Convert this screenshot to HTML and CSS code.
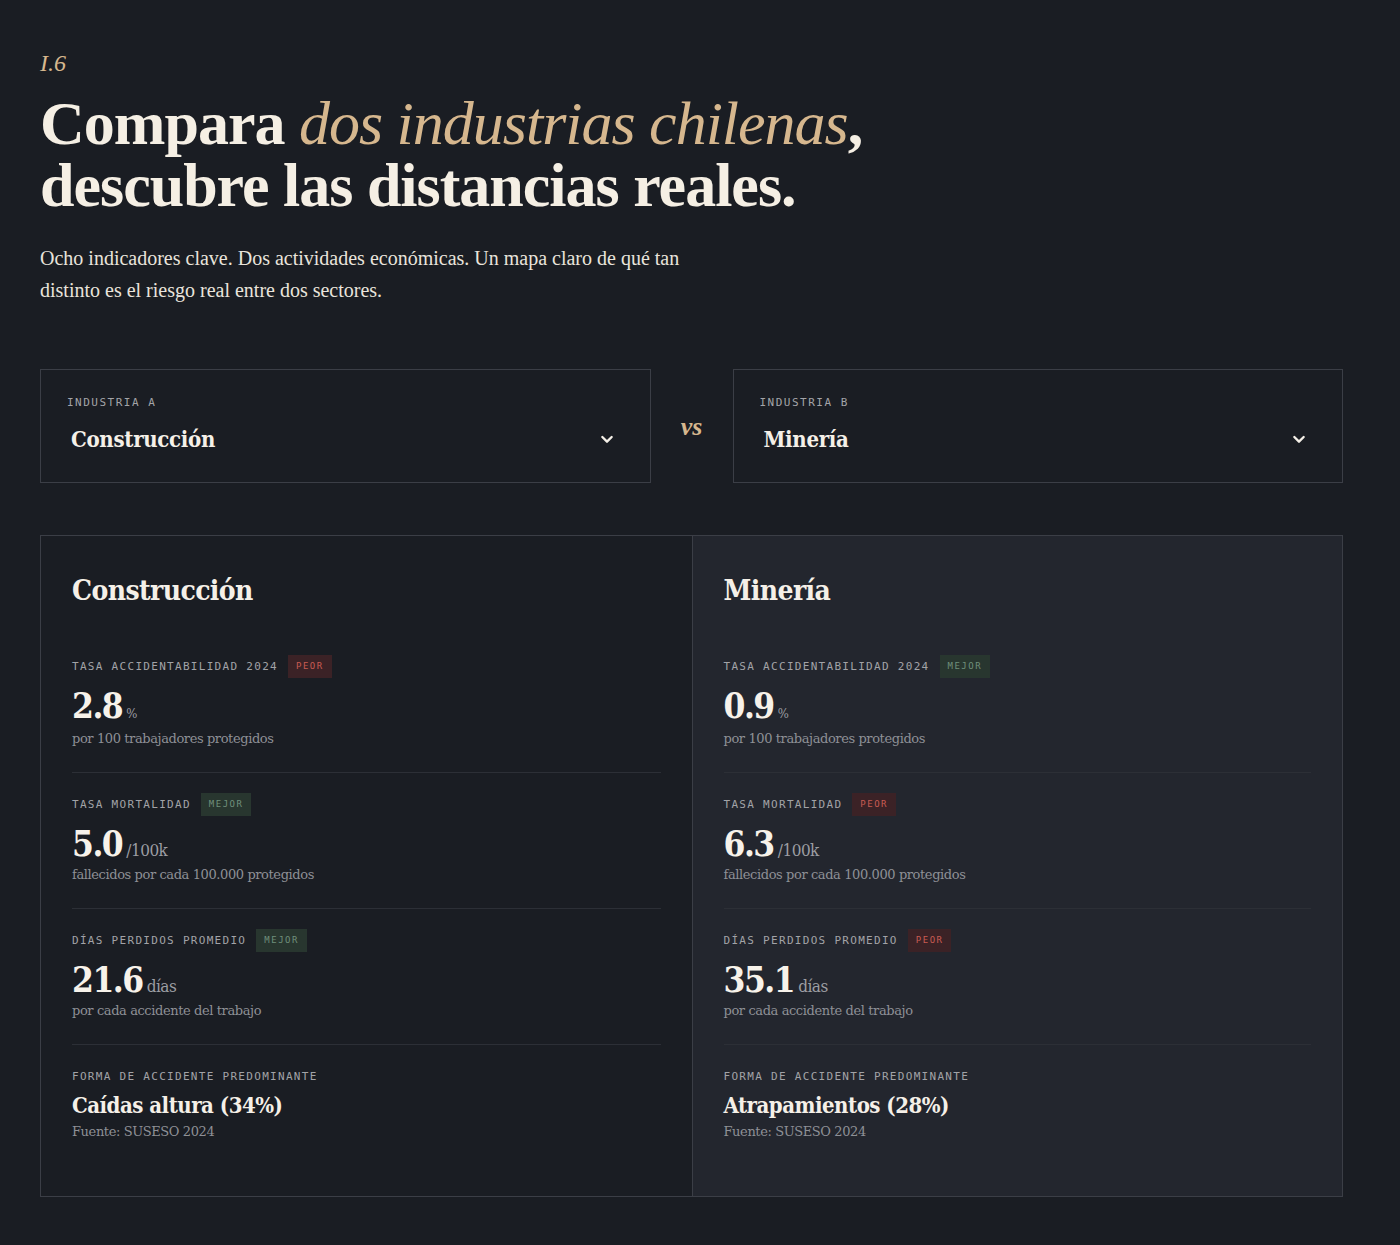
FILE: index.html
```html
<!DOCTYPE html>
<html lang="es">
<head>
    <meta charset="UTF-8">
    <meta name="viewport" content="width=device-width, initial-scale=1.0">
    <title>Compara dos industrias chilenas</title>
    <link rel="stylesheet" href="styles.css">
</head>
<body>

    <div class="container">
        <div class="eyebrow">I.6</div>
        <h1>Compara <em>dos industrias chilenas</em>,<br>descubre las distancias reales.</h1>
        <p class="intro">Ocho indicadores clave. Dos actividades económicas. Un mapa claro de qué tan distinto es el riesgo real entre dos sectores.</p>

        <div class="pickers">
            <div class="picker">
                <div class="picker-label">INDUSTRIA A</div>
                <div class="picker-value">
                    <span>Construcción</span>
                    <svg class="chevron" width="16" height="16" viewBox="0 0 24 24"><path d="M5 9l7 7 7-7" fill="none" stroke="currentColor" stroke-width="3.5" stroke-linecap="round" stroke-linejoin="round"/></svg>
                </div>
            </div>
            <div class="vs">vs</div>
            <div class="picker">
                <div class="picker-label">INDUSTRIA B</div>
                <div class="picker-value">
                    <span>Minería</span>
                    <svg class="chevron" width="16" height="16" viewBox="0 0 24 24"><path d="M5 9l7 7 7-7" fill="none" stroke="currentColor" stroke-width="3.5" stroke-linecap="round" stroke-linejoin="round"/></svg>
                </div>
            </div>
        </div>

        <div class="compare">
            <div class="col">
                <h2>Construcción</h2>

                <div class="metric">
                    <div class="metric-label">TASA ACCIDENTABILIDAD 2024 <span class="badge worse">PEOR</span></div>
                    <div class="metric-value">2.8<span class="unit small">%</span></div>
                    <div class="metric-desc">por 100 trabajadores protegidos</div>
                </div>
                <div class="metric">
                    <div class="metric-label">TASA MORTALIDAD <span class="badge better">MEJOR</span></div>
                    <div class="metric-value">5.0<span class="unit">/100k</span></div>
                    <div class="metric-desc">fallecidos por cada 100.000 protegidos</div>
                </div>
                <div class="metric">
                    <div class="metric-label">DÍAS PERDIDOS PROMEDIO <span class="badge better">MEJOR</span></div>
                    <div class="metric-value">21.6<span class="unit">días</span></div>
                    <div class="metric-desc">por cada accidente del trabajo</div>
                </div>
                <div class="metric last">
                    <div class="metric-label">FORMA DE ACCIDENTE PREDOMINANTE</div>
                    <div class="metric-text">Caídas altura (34%)</div>
                    <div class="source">Fuente: SUSESO 2024</div>
                </div>
            </div>

            <div class="col alt">
                <h2>Minería</h2>

                <div class="metric">
                    <div class="metric-label">TASA ACCIDENTABILIDAD 2024 <span class="badge better">MEJOR</span></div>
                    <div class="metric-value">0.9<span class="unit small">%</span></div>
                    <div class="metric-desc">por 100 trabajadores protegidos</div>
                </div>
                <div class="metric">
                    <div class="metric-label">TASA MORTALIDAD <span class="badge worse">PEOR</span></div>
                    <div class="metric-value">6.3<span class="unit">/100k</span></div>
                    <div class="metric-desc">fallecidos por cada 100.000 protegidos</div>
                </div>
                <div class="metric">
                    <div class="metric-label">DÍAS PERDIDOS PROMEDIO <span class="badge worse">PEOR</span></div>
                    <div class="metric-value">35.1<span class="unit">días</span></div>
                    <div class="metric-desc">por cada accidente del trabajo</div>
                </div>
                <div class="metric last">
                    <div class="metric-label">FORMA DE ACCIDENTE PREDOMINANTE</div>
                    <div class="metric-text">Atrapamientos (28%)</div>
                    <div class="source">Fuente: SUSESO 2024</div>
                </div>
            </div>
        </div>
    </div>

</body>
</html>
```

FILE: styles.css
```css
body {
    margin: 0;
    background-color: #1a1d23;
    color: #f3ede2;
    font-family: "Liberation Serif", serif;
}
.container {
    width: 1303px;
    padding: 48px 40px 48px 40px;
}
.eyebrow {
    font-style: italic;
    font-size: 24px;
    color: #d6b78e;
    line-height: 30px;
}
h1 {
    margin: 14px 0 0 0;
    font-size: 62px;
    line-height: 62px;
    font-weight: 700;
    letter-spacing: -1px;
    color: #f5efe4;
}
h1 em {
    color: #d6b78e;
    font-weight: 400;
}
.intro {
    margin: 26px 0 0 0;
    max-width: 700px;
    font-size: 20px;
    line-height: 32px;
    color: #e9e4dc;
}
.pickers {
    display: flex;
    align-items: center;
    gap: 27px;
    margin-top: 63px;
}
.picker {
    flex: 1;
    height: 114px;
    box-sizing: border-box;
    border: 1px solid #3b3e46;
    padding: 26px 24px 0 26px;
}
.picker-label {
    font-family: "DejaVu Sans Mono", monospace;
    font-size: 11px;
    letter-spacing: 1.5px;
    color: #a3a4a8;
}
.picker-value {
    display: flex;
    justify-content: space-between;
    align-items: center;
    margin-top: 17px;
    padding-left: 4px;
    font-family: "DejaVu Serif Condensed", "DejaVu Serif", serif;
    font-stretch: condensed;
    font-weight: 700;
    font-size: 22px;
    letter-spacing: -0.3px;
    color: #f5f0e8;
}
.chevron {
    color: #f5f0e8;
    margin-right: 11px;
}
.vs {
    width: 28px;
    text-align: center;
    font-style: italic;
    font-weight: 700;
    font-size: 26px;
    color: #d6b78e;
    margin-top: 2px;
}
.compare {
    display: grid;
    grid-template-columns: 1fr 1fr;
    margin-top: 52px;
    border: 1px solid #3b3e46;
}
.col {
    padding: 38px 31px 57px 31px;
}
.col.alt {
    background-color: #23262e;
    border-left: 1px solid #3b3e46;
}
h2 {
    margin: 0 0 48px 0;
    font-family: "DejaVu Serif Condensed", "DejaVu Serif", serif;
    font-stretch: condensed;
    font-size: 28px;
    font-weight: 700;
    letter-spacing: -0.6px;
    color: #f5f0e8;
}
.metric {
    padding: 20px 0 26px 0;
    border-bottom: 1px solid #2c2f36;
}
.metric:first-of-type {
    padding-top: 0;
}
.metric.last {
    border-bottom: none;
    padding-bottom: 0;
}
.metric-label {
    display: flex;
    align-items: center;
    gap: 10px;
    height: 22px;
    font-family: "DejaVu Sans Mono", monospace;
    font-size: 11px;
    letter-spacing: 1.3px;
    color: #a2a3a7;
}
.badge {
    font-size: 9px;
    letter-spacing: 1.5px;
    padding: 6px 8px;
    line-height: 11px;
}
.badge.worse {
    background-color: #3b2226;
    color: #c85b52;
}
.badge.better {
    background-color: #28362f;
    color: #6f8f7b;
}
.metric-value {
    margin-top: 8px;
    font-family: "DejaVu Serif Condensed", "DejaVu Serif", serif;
    font-stretch: condensed;
    font-weight: 700;
    font-size: 35px;
    line-height: 42px;
    letter-spacing: -1.5px;
    color: #f7f2ea;
}
.unit {
    font-weight: 400;
    font-size: 17px;
    letter-spacing: -0.5px;
    color: #9d9ea3;
    margin-left: 4px;
}
.unit.small {
    font-size: 13px;
}
.metric-desc,
.source {
    margin-top: -4px;
    font-family: "DejaVu Serif", serif;
    font-size: 13px;
    letter-spacing: -0.4px;
    color: #8e9096;
}
.metric-text {
    margin-top: 3px;
    font-family: "DejaVu Serif Condensed", "DejaVu Serif", serif;
    font-stretch: condensed;
    font-weight: 700;
    font-size: 22px;
    line-height: 30px;
    letter-spacing: -0.5px;
    color: #f5f0e8;
}
.source {
    margin-top: 4px;
}
```
